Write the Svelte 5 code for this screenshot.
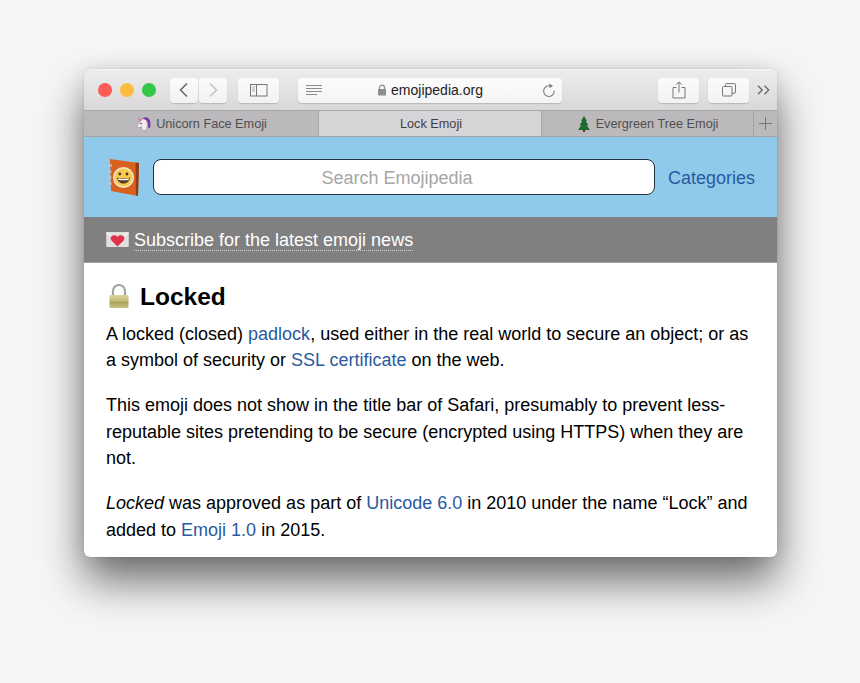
<script lang="ts">
  const tabs = [
    { label: 'Unicorn Face Emoji', icon: 'unicorn' },
    { label: 'Lock Emoji', icon: '', active: true },
    { label: 'Evergreen Tree Emoji', icon: 'tree' }
  ];
</script>

{#snippet lockEmoji()}
  <svg class="lock-emoji" viewBox="0 0 20 24" width="20" height="24">
    <defs>
      <linearGradient id="brass" x1="0" x2="0" y1="0" y2="1">
        <stop offset="0" stop-color="#d9d69c" />
        <stop offset="0.48" stop-color="#c2bb78" />
        <stop offset="0.52" stop-color="#a8a05c" />
        <stop offset="1" stop-color="#c9c386" />
      </linearGradient>
    </defs>
    <path d="M4 12V7a6 6 0 0 1 12 0v5" fill="none" stroke="#9fa3a6" stroke-width="2.2" />
    <rect x="0.5" y="11" width="19" height="13" rx="1" fill="url(#brass)" />
  </svg>
{/snippet}

<div class="stage">
  <div class="window">
    <header class="toolbar">
      <div class="lights">
        <span class="light red"></span>
        <span class="light yellow"></span>
        <span class="light green"></span>
      </div>
      <div class="nav-pair">
        <button class="tool nav" aria-label="Back">
          <svg viewBox="0 0 14 18" width="14" height="18"><path d="M10 2.500 3.500 9l6.500 6.500" fill="none" stroke="#6c6c6c" stroke-width="1.600" /></svg>
        </button>
        <button class="tool nav" aria-label="Forward">
          <svg viewBox="0 0 14 18" width="14" height="18"><path d="M4 2.500 10.500 9 4 15.500" fill="none" stroke="#c4c4c4" stroke-width="1.600" /></svg>
        </button>
      </div>
      <button class="tool sidebar" aria-label="Sidebar">
        <svg viewBox="0 0 18 14" width="18" height="14">
          <rect x="0.500" y="1.500" width="16.500" height="11.500" fill="none" stroke="#777" />
          <path d="M6.500 1.500v11.500" stroke="#777" />
          <path d="M2 4h3M2 6h3M2 8h3" stroke="#aaa" />
        </svg>
      </button>
      <div class="address">
        <svg class="reader" viewBox="0 0 16 12" width="16" height="12"><path d="M0 .5h16M0 3.500h16M0 6.500h16M0 9.500h11" stroke="#8a8a8a" /></svg>
        <span class="host">
          <svg viewBox="0 0 10 12" width="10" height="12">
            <path d="M2.500 5.500V3.600a2.500 2.500 0 0 1 5 0v1.900" fill="none" stroke="#8d8d8d" stroke-width="1.200" />
            <rect x="1" y="5" width="8" height="6.500" rx="0.800" fill="#8d8d8d" />
          </svg>
          emojipedia.org
        </span>
        <svg class="reload" viewBox="0 0 14 15" width="14" height="15">
          <path d="M7.800 2.900a5.300 5.300 0 1 0 4.400 4.600" fill="none" stroke="#7e7e7e" stroke-width="1.100" />
          <path d="M7.400 0.400 11 2.900 7.400 5.200z" fill="#7e7e7e" />
        </svg>
      </div>
      <button class="tool action" aria-label="Share">
        <svg viewBox="0 0 14 18" width="14" height="18">
          <path d="M4.500 6.500H1v10.500h12V6.500H9.500" fill="none" stroke="#777" />
          <path d="M7 11.500V1M4.200 3.600 7 .9l2.800 2.700" fill="none" stroke="#777" />
        </svg>
      </button>
      <button class="tool action tabs-btn" aria-label="Show tabs">
        <svg viewBox="0 0 14 14" width="14" height="14">
          <rect x="0.500" y="3.500" width="9.500" height="9.500" rx="1" fill="none" stroke="#777" />
          <path d="M3.500 3.500V1.600a1 1 0 0 1 1-1h8a1 1 0 0 1 1 1v7.600a1 1 0 0 1-1 1H10" fill="none" stroke="#777" />
        </svg>
      </button>
      <svg class="more" viewBox="0 0 14 10" width="14" height="10"><path d="M1 .8 5.200 5 1 9.200M7.500.8 11.700 5 7.500 9.200" fill="none" stroke="#666" stroke-width="1.300" /></svg>
    </header>

    <nav class="tabbar">
      {#each tabs as tab}
        <div class="tab" class:active={tab.active}>
          {#if tab.icon === 'unicorn'}
            <svg viewBox="0 0 16 16" width="16" height="16">
              <path d="M9 2.500C6.500 3 5.500 4.500 4.800 6L2 9.500 2.500 11.500 5 11.500 6.500 10.500 7 14.500H11.500L12.500 8 11.500 4z" fill="#f1ecf1" stroke="#8d7f99" stroke-width="0.500" />
              <path d="M7.500 3C9 .5 13 .8 14.500 3.500c1.200 2.500 1.300 6 .5 8.500-.8-.5-1.500-.8-2-.5.400-3 0-6-2-7.500C9.500 3 8.500 3 7.500 3z" fill="#7d3aa3" />
              <path d="M5.500 5.500 1.800 1.500 7 3.500z" fill="#d76fae" />
              <circle cx="6" cy="7.500" r="0.800" fill="#3a2c4a" />
            </svg>
          {:else if tab.icon === 'tree'}
            <svg viewBox="0 0 14 16" width="14" height="16">
              <path d="M7 0 10 5H8.800L11.500 9.500H9.800L13 14H1L4.200 9.500H2.500L5.200 5H4z" fill="#1c6b33" />
              <rect x="6" y="13.500" width="2" height="2.500" fill="#5b3a1e" />
            </svg>
          {/if}
          <span>{tab.label}</span>
        </div>
      {/each}
      <div class="new-tab">
        <svg viewBox="0 0 13 13" width="13" height="13"><path d="M6.500 0v13M0 6.500h13" stroke="#757575" /></svg>
      </div>
    </nav>

    <div class="site-head">
      <svg class="logo" viewBox="0 0 33 37" width="33" height="37">
        <path d="M3 0 32 4 31 37 4 32z" fill="#d9601f" />
        <path d="M28.500 3.500 32 4 31 37 29 36.500z" fill="#8f3d16" />
        <path d="M1 6.500h4M.5 12.500h4M.5 18.500h4M.5 24.500h4" stroke="#c4c4ce" stroke-width="1.800" />
        <circle cx="16.500" cy="18.500" r="10.500" fill="#f7e6cf" />
        <circle cx="16.500" cy="18.500" r="9" fill="#f6cc4f" />
        <circle cx="12.800" cy="15" r="1.400" fill="#4a3320" />
        <circle cx="20" cy="15" r="1.400" fill="#4a3320" />
        <path d="M10 18.500c4 1.300 9 1.300 13 0-.6 4.200-3.400 6-6.500 6s-5.900-1.800-6.500-6z" fill="#5c3a22" />
        <path d="M11 19.300c3.400.8 7.600.8 11 0l-.5 1.600c-3.300.5-6.700.5-10 0z" fill="#fff" />
      </svg>
      <div class="search">Search Emojipedia</div>
      <a class="categories" href="#categories">Categories</a>
    </div>

    <div class="subscribe">
      <svg viewBox="0 0 24 16" width="23" height="15">
        <rect width="24" height="16" rx="1" fill="#e0e0de" />
        <path d="M0 .8 12 9 24 .8" fill="none" stroke="#f8f8f8" stroke-width="1.200" />
        <path d="M12 15.500 5.500 9C2.500 5.500 8 1 12 5.200 16 1 21.500 5.500 18.500 9z" fill="#e3304a" />
      </svg>
      <a href="#subscribe">Subscribe for the latest emoji news</a>
    </div>

    <main class="content">
      <h1>{@render lockEmoji()}Locked</h1>
      <p>A locked (closed) <a href="#padlock">padlock</a>, used either in the real world to secure an object; or as a symbol of security or <a href="#ssl">SSL certificate</a> on the web.</p>
      <p>This emoji does not show in the title bar of Safari, presumably to prevent less-reputable sites pretending to be secure (encrypted using HTTPS) when they are not.</p>
      <p><em>Locked</em> was approved as part of <a href="#unicode">Unicode 6.0</a> in 2010 under the name “Lock” and added to <a href="#emoji">Emoji 1.0</a> in 2015.</p>
    </main>
  </div>
</div>

<style>
  :global(body) {
    background: #f6f6f6;
    font-family: "Liberation Sans", Arial, sans-serif;
  }
  .stage {
    height: 683px;
    padding: 69px 83px 0 84px;
    box-sizing: border-box;
    overflow: hidden;
  }
  .window {
    height: 488px;
    border-radius: 6px;
    overflow: hidden;
    background: #fff;
    box-shadow:
      0 0 1px rgba(0, 0, 0, 0.35),
      0 0 18px rgba(0, 0, 0, 0.08),
      0 24px 44px rgba(0, 0, 0, 0.56);
  }
  .toolbar {
    height: 41px;
    box-sizing: border-box;
    display: flex;
    align-items: center;
    padding: 0 7px 0 14px;
    background: linear-gradient(#eeeded, #d9d7d9);
    border-top: 1px solid #f5f5f5;
  }
  .toolbar > * {
    flex-shrink: 0;
  }
  .lights {
    display: flex;
    gap: 8px;
    margin-right: 14px;
  }
  .light {
    width: 14px;
    height: 14px;
    border-radius: 50%;
  }
  .red { background: #fc5b57; }
  .yellow { background: #fdbc40; }
  .green { background: #34c84a; }
  .nav-pair {
    display: flex;
    gap: 1px;
    margin-right: 11px;
  }
  .tool {
    height: 25px;
    padding: 0;
    display: flex;
    align-items: center;
    justify-content: center;
    border: none;
    border-radius: 4px;
    background: linear-gradient(#fbfbfb, #f2f2f2);
    box-shadow: 0 1px 1px rgba(0, 0, 0, 0.16);
  }
  .nav { width: 28px; }
  .sidebar { width: 41px; margin-right: 19px; }
  .address {
    width: 264px;
    height: 25px;
    display: flex;
    align-items: center;
    position: relative;
    justify-content: center;
    border-radius: 4px;
    background: linear-gradient(#fcfcfc, #f4f4f4);
    box-shadow: 0 1px 1px rgba(0, 0, 0, 0.16);
    margin-right: 96px;
  }
  .reader {
    position: absolute;
    left: 8px;
    top: 7px;
  }
  .reload {
    position: absolute;
    right: 6px;
    top: 5px;
  }
  .host {
    display: flex;
    align-items: center;
    gap: 4px;
    font-size: 14px;
    color: #222;
  }
  .action { width: 41px; margin-right: 9px; }
  .tabs-btn { margin-right: 8px; }
  .tabbar {
    height: 27px;
    box-sizing: border-box;
    display: flex;
    background: #bbb9bb;
    border-top: 1px solid #a9a7a9;
    border-bottom: 1px solid #a3a3a3;
    font-size: 12.7px;
    color: #4f4f4f;
  }
  .tab {
    flex: 0 0 223px;
    display: flex;
    align-items: center;
    justify-content: center;
    gap: 5px;
    box-sizing: border-box;
  }
  .tab:first-child { flex-basis: 234px; }
  .tab:nth-child(3) { flex-basis: 211px; }
  .tab.active {
    flex-basis: 224px;
    padding-left: 2px;
    background: #d6d4d6;
    border-left: 1px solid #a9a7a9;
    border-right: 1px solid #a9a7a9;
    color: #3e3e3e;
  }
  .new-tab {
    flex: 1;
    display: flex;
    align-items: center;
    justify-content: center;
    border-left: 1px solid #a3a1a3;
  }
  .site-head {
    height: 80px;
    box-sizing: border-box;
    display: flex;
    align-items: center;
    background: #90caea;
    padding: 0 22px 0 23px;
  }
  .logo { margin-right: 13px; }
  .search {
    flex: 1;
    height: 36px;
    box-sizing: border-box;
    border: 1.500px solid #22343f;
    border-radius: 8px;
    background: #fff;
    display: flex;
    align-items: center;
    justify-content: center;
    color: #a6a6a6;
    font-size: 18px;
    padding: 2px 14px 0 0;
    margin-right: 13px;
  }
  .categories {
    color: #2a5aa0;
    font-size: 18px;
    text-decoration: none;
    padding-top: 2px;
  }
  .subscribe {
    height: 46px;
    box-sizing: border-box;
    display: flex;
    align-items: center;
    gap: 5px;
    padding: 0 22px;
    background: #808080;
    border-bottom: 1px solid #a0a0a0;
  }
  .subscribe svg {
    margin-top: -1px;
  }
  .subscribe a {
    color: #fff;
    font-size: 18px;
    line-height: 19px;
    margin-top: 3px;
    text-decoration: none;
    border-bottom: 1px dotted #d0d0d0;
  }
  .content {
    padding: 18px 22px 0;
    color: #000;
    font-size: 18px;
    line-height: 26.400px;
  }
  h1 {
    display: flex;
    align-items: center;
    gap: 11px;
    margin: 0 0 8px 3px;
    font-size: 24.500px;
    line-height: 32px;
  }
  .lock-emoji {
    margin-top: -3px;
  }
  .content p {
    margin: 0 0 18.600px;
  }
  .content a {
    color: #2a5aa0;
    text-decoration: none;
  }
</style>
